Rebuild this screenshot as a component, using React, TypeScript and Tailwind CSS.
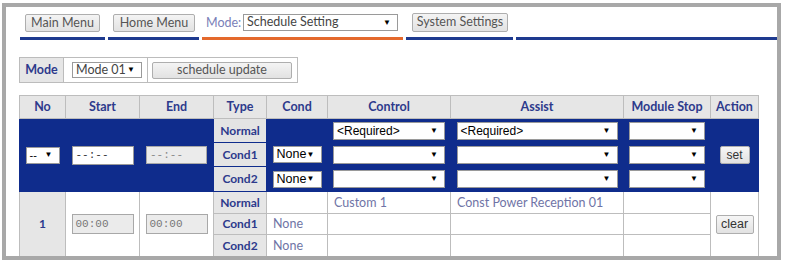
import React from "react";

const Arrow = () => (
  <span className="text-[8px] leading-none text-black font-['Liberation_Sans',sans-serif]">▼</span>
);

function Sel({ cls, text, textCls }: { cls: string; text?: string; textCls?: string }) {
  return (
    <div
      className={
        "flex items-center justify-between bg-white border border-[#9a9a9a] pl-[3px] pr-[6px] " + cls
      }
    >
      <span className={textCls ?? "font-['Liberation_Sans',sans-serif] text-[12px] text-black leading-none"}>
        {text ?? ""}
      </span>
      <Arrow />
    </div>
  );
}

const blueTd = "border border-[#0f2c8c] bg-[#0f2c8c] p-0";
const typeBlue = "border border-[#0f2c8c] bg-[#e4e4e4] text-center text-[#2d3a8c] font-bold text-[12px] p-0";
const wTd = "border border-[#bdbdbd] bg-white p-0";
const typeW = "border border-[#bdbdbd] bg-[#e6e6e6] text-center text-[#2d3a8c] font-bold text-[12px] p-0";
const lav = "text-[#6f74a6] text-[12.5px] pl-[6px]";
const btn =
  "block border border-[#aeaeae] rounded-[2px] bg-gradient-to-b from-[#f4f4f4] to-[#e2e2e2] text-[12.5px] text-[#555] leading-none";

export default function App() {
  return (
    <div className="w-[786px] h-[268px] bg-white font-['Lato',sans-serif]">
      <div className="ml-[2px] mt-[3px] w-[779px] h-[257px] border-[4px] border-[#a8a8a8] bg-white overflow-hidden">
        {/* Menu bar */}
        <div className="flex gap-[3px] pl-[14px]">
          <div className="w-[85px] h-[33px] pt-[7px] pl-[5px] border-b-[3px] border-[#1e3a8f] flex items-start">
            <button className={btn + " w-[75px] h-[18px]"}>Main Menu</button>
          </div>
          <div className="w-[91px] h-[33px] pt-[7px] pl-[5px] border-b-[3px] border-[#1e3a8f] flex items-start">
            <button className={btn + " w-[82px] h-[18px]"}>Home Menu</button>
          </div>
          <div className="w-[201px] h-[33px] pt-[7px] pl-[4px] border-b-[3px] border-[#e4692c] flex items-start">
            <span className="text-[12.5px] text-[#7a80b8] leading-[17px] w-[37px]">Mode:</span>
            <Sel
              cls="w-[155px] h-[17px]"
              text="Schedule Setting"
              textCls="font-['Lato',sans-serif] text-[12.5px] text-[#444] leading-none"
            />
          </div>
          <div className="w-[107px] h-[33px] pt-[6px] pl-[6px] border-b-[3px] border-[#1e3a8f] flex items-start">
            <button className={btn + " w-[96px] h-[19px]"}>System Settings</button>
          </div>
          <div className="flex-1 h-[33px] border-b-[3px] border-[#1e3a8f]" />
        </div>

        <div className="pl-[13px] text-[12px] leading-[14px]">
          {/* Mode row */}
          <table className="mt-[17px] border-collapse">
            <tbody>
              <tr className="h-[25px]">
                <td className="border border-[#bcbcbc] bg-[#e6e6e6] w-[44px] text-center text-[12.5px] font-bold text-[#2d3a8c] p-0">
                  Mode
                </td>
                <td className="border border-[#bcbcbc] w-[84px] p-0 pl-[8px]">
                  <Sel
                    cls="w-[70px] h-[16px]"
                    text="Mode 01"
                    textCls="font-['Lato',sans-serif] text-[12.5px] text-[#444] leading-none"
                  />
                </td>
                <td className="border border-[#bcbcbc] w-[150px] p-0 pl-[4px]">
                  <button className={btn + " w-[140px] h-[17px]"}>schedule update</button>
                </td>
              </tr>
            </tbody>
          </table>

          {/* Main table */}
          <table className="mt-[12px] border-collapse table-fixed w-[739px]">
            <colgroup>
              <col className="w-[46px]" />
              <col className="w-[74px]" />
              <col className="w-[74px]" />
              <col className="w-[53px]" />
              <col className="w-[61px]" />
              <col className="w-[123px]" />
              <col className="w-[173px]" />
              <col className="w-[87px]" />
              <col className="w-[48px]" />
            </colgroup>
            <thead>
              <tr className="h-[23px]">
                {["No", "Start", "End", "Type", "Cond", "Control", "Assist", "Module Stop", "Action"].map((h) => (
                  <th
                    key={h}
                    className="border border-[#bdbdbd] bg-[#e6e6e6] text-[#2d3a8c] font-bold text-[12.5px] p-0"
                  >
                    {h}
                  </th>
                ))}
              </tr>
            </thead>
            <tbody>
              <tr className="h-[24px]">
                <td rowSpan={3} className={blueTd}>
                  <div className="flex justify-center">
                    <Sel cls="w-[34px] h-[17px] pr-[5px]" text="--" textCls="font-['Liberation_Sans',sans-serif] text-[11px] text-black leading-none" />
                  </div>
                </td>
                <td rowSpan={3} className={blueTd}>
                  <div className="flex justify-center">
                    <div className="w-[62px] h-[19px] bg-white border border-[#9a9a9a] flex items-center pl-[3px] font-['Liberation_Mono',monospace] text-[11px] text-[#333]">
                      --:--
                    </div>
                  </div>
                </td>
                <td rowSpan={3} className={blueTd}>
                  <div className="flex justify-center">
                    <div className="w-[61px] h-[18px] bg-[#ebebeb] border border-[#a8a8a8] flex items-center pl-[3px] font-['Liberation_Mono',monospace] text-[11px] text-[#888]">
                      --:--
                    </div>
                  </div>
                </td>
                <td className={typeBlue}>Normal</td>
                <td className={blueTd} />
                <td className={blueTd}>
                  <div className="flex justify-center">
                    <Sel cls="w-[112px] h-[18px]" text="<Required>" />
                  </div>
                </td>
                <td className={blueTd}>
                  <div className="flex justify-center">
                    <Sel cls="w-[161px] h-[18px]" text="<Required>" />
                  </div>
                </td>
                <td className={blueTd}>
                  <div className="flex justify-center">
                    <Sel cls="w-[76px] h-[18px]" />
                  </div>
                </td>
                <td rowSpan={3} className={blueTd}>
                  <div className="flex justify-center">
                    <button className="block w-[30px] h-[18px] border border-[#aeaeae] rounded-[2px] bg-gradient-to-b from-[#f6f6f6] to-[#e2e2e2] font-['Liberation_Sans',sans-serif] text-[12px] text-[#333] leading-none">
                      set
                    </button>
                  </div>
                </td>
              </tr>
              {["Cond1", "Cond2"].map((c) => (
                <tr key={c} className={c === "Cond1" ? "h-[24px]" : "h-[25px]"}>
                  <td className={typeBlue}>{c}</td>
                  <td className={blueTd}>
                    <div className="flex justify-center">
                      <Sel cls="w-[49px] h-[17px] pr-[4px]" text="None" textCls="font-['Liberation_Sans',sans-serif] text-[12.5px] text-black leading-none" />
                    </div>
                  </td>
                  <td className={blueTd}>
                    <div className="flex justify-center">
                      <Sel cls="w-[112px] h-[18px]" />
                    </div>
                  </td>
                  <td className={blueTd}>
                    <div className="flex justify-center">
                      <Sel cls="w-[161px] h-[18px]" />
                    </div>
                  </td>
                  <td className={blueTd}>
                    <div className="flex justify-center">
                      <Sel cls="w-[76px] h-[18px]" />
                    </div>
                  </td>
                </tr>
              ))}

              <tr className="h-[22px]">
                <td rowSpan={3} className="border border-[#bdbdbd] bg-[#e6e6e6] text-center text-[#2d3a8c] font-bold text-[12px] p-0">
                  1
                </td>
                <td rowSpan={3} className={wTd}>
                  <div className="flex justify-center">
                    <div className="w-[62px] h-[20px] bg-[#ebebeb] border border-[#a8a8a8] flex items-center pl-[3px] font-['Liberation_Mono',monospace] text-[11px] text-[#777]">
                      00:00
                    </div>
                  </div>
                </td>
                <td rowSpan={3} className={wTd}>
                  <div className="flex justify-center">
                    <div className="w-[62px] h-[20px] bg-[#ebebeb] border border-[#a8a8a8] flex items-center pl-[3px] font-['Liberation_Mono',monospace] text-[11px] text-[#777]">
                      00:00
                    </div>
                  </div>
                </td>
                <td className={typeW}>Normal</td>
                <td className={wTd} />
                <td className={wTd}>
                  <span className={lav}>Custom 1</span>
                </td>
                <td className={wTd}>
                  <span className={lav}>Const Power Reception 01</span>
                </td>
                <td className={wTd} />
                <td rowSpan={3} className={wTd}>
                  <div className="flex justify-center">
                    <button className="block w-[38px] h-[19px] border border-[#aeaeae] rounded-[2px] bg-gradient-to-b from-[#f6f6f6] to-[#e2e2e2] font-['Liberation_Sans',sans-serif] text-[12.5px] text-[#333] leading-none">
                      clear
                    </button>
                  </div>
                </td>
              </tr>
              <tr className="h-[21px]">
                <td className={typeW}>Cond1</td>
                <td className={wTd}>
                  <span className={lav}>None</span>
                </td>
                <td className={wTd} />
                <td className={wTd} />
                <td className={wTd} />
              </tr>
              <tr className="h-[22px]">
                <td className={typeW}>Cond2</td>
                <td className={wTd}>
                  <span className={lav}>None</span>
                </td>
                <td className={wTd} />
                <td className={wTd} />
                <td className={wTd} />
              </tr>
            </tbody>
          </table>
        </div>
      </div>
    </div>
  );
}
